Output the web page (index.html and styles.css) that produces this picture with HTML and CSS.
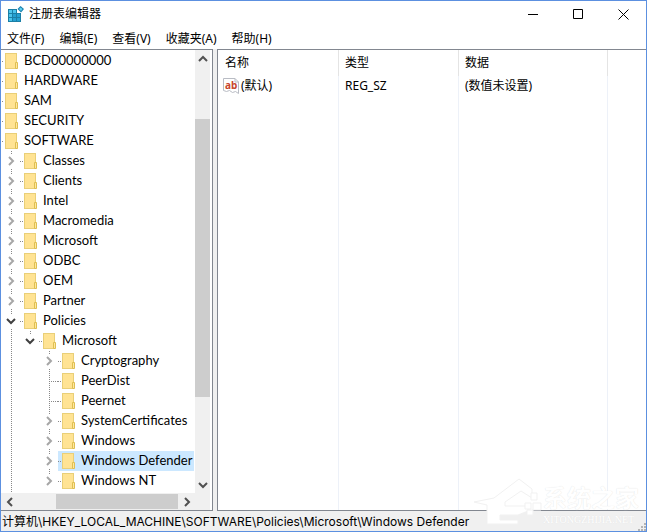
FILE: index.html
```html
<!DOCTYPE html>
<html lang="zh-CN">
<head>
<meta charset="utf-8">
<title>注册表编辑器</title>
<link rel="stylesheet" href="styles.css">
</head>
<body>
<svg class="defs" aria-hidden="true">
  <symbol id="folder" viewBox="0 0 13 16">
    <rect x=".5" y=".5" width="11" height="15" fill="#ffe393" stroke="#e9cf78"/>
    <path d="M10.500 9.500h2v6h-2z" fill="#ffe79f" stroke="#dfbf52"/>
  </symbol>
  <symbol id="right" viewBox="0 0 10 10"><path d="M3 1l4 4-4 4" fill="none" stroke="currentColor" stroke-width="2"/></symbol>
  <symbol id="left" viewBox="0 0 10 10"><path d="M7 1L3 5l4 4" fill="none" stroke="currentColor" stroke-width="2"/></symbol>
  <symbol id="down" viewBox="0 0 10 10"><path d="M1 3l4 4 4-4" fill="none" stroke="currentColor" stroke-width="2"/></symbol>
  <symbol id="up" viewBox="0 0 10 10"><path d="M1 7l4-4 4 4" fill="none" stroke="currentColor" stroke-width="2"/></symbol>
</svg>
<div class="window">
  <header class="titlebar">
    <svg class="app-icon" viewBox="0 0 16 16" aria-hidden="true">
      <path d="M0 3h9v4h4v9H0z" fill="#1b7fa6"/>
      <path d="M1 4h3v3H1zM5 4h3v3H5zM1 8h3v3H1zM1 12h3v3H1z" fill="#4cc4ec"/>
      <path d="M5 8h3v3H5zM9 8h3v3H9zM5 12h3v3H5zM9 12h3v3H9z" fill="#25a0d2"/>
      <path d="M12.500 0L16 3l-3 3.500L9.500 3z" fill="#1880ad"/>
      <path d="M12.500 1.500L14.500 3 13 5 11 3z" fill="#5fd0f2"/>
    </svg>
    <h1>注册表编辑器</h1>
    <div class="controls">
      <button aria-label="最小化"><svg viewBox="0 0 11 11"><path d="M0 5.500h10" stroke="#000"/></svg></button>
      <button aria-label="最大化"><svg viewBox="0 0 11 11"><path d="M.5.5h9v9H.5z" fill="none" stroke="#000"/></svg></button>
      <button aria-label="关闭"><svg viewBox="0 0 11 11"><path d="M.5.5l10 10M10.500.5l-10 10" stroke="#000"/></svg></button>
    </div>
  </header>
  <nav class="menu">
    <button>文件(F)</button><button>编辑(E)</button><button>查看(V)</button><button>收藏夹(A)</button><button>帮助(H)</button>
  </nav>
  <main class="panes">
    <section class="pane tree-pane">
      <div class="tree">
        <ul class="root">
          <li><div class="row"><svg class="folder"><use href="#folder"/></svg><span>BCD00000000</span></div></li>
          <li><div class="row"><svg class="folder"><use href="#folder"/></svg><span>HARDWARE</span></div></li>
          <li><div class="row"><svg class="folder"><use href="#folder"/></svg><span>SAM</span></div></li>
          <li><div class="row"><svg class="folder"><use href="#folder"/></svg><span>SECURITY</span></div></li>
          <li class="fill"><div class="row"><svg class="folder"><use href="#folder"/></svg><span>SOFTWARE</span></div>
            <ul class="branch open-end">
              <li class="node"><button class="toggle" aria-label="展开"><svg><use href="#right"/></svg></button><div class="row"><svg class="folder"><use href="#folder"/></svg><span>Classes</span></div></li>
              <li class="node"><button class="toggle" aria-label="展开"><svg><use href="#right"/></svg></button><div class="row"><svg class="folder"><use href="#folder"/></svg><span>Clients</span></div></li>
              <li class="node"><button class="toggle" aria-label="展开"><svg><use href="#right"/></svg></button><div class="row"><svg class="folder"><use href="#folder"/></svg><span>Intel</span></div></li>
              <li class="node"><button class="toggle" aria-label="展开"><svg><use href="#right"/></svg></button><div class="row"><svg class="folder"><use href="#folder"/></svg><span>Macromedia</span></div></li>
              <li class="node"><button class="toggle" aria-label="展开"><svg><use href="#right"/></svg></button><div class="row"><svg class="folder"><use href="#folder"/></svg><span>Microsoft</span></div></li>
              <li class="node"><button class="toggle" aria-label="展开"><svg><use href="#right"/></svg></button><div class="row"><svg class="folder"><use href="#folder"/></svg><span>ODBC</span></div></li>
              <li class="node"><button class="toggle" aria-label="展开"><svg><use href="#right"/></svg></button><div class="row"><svg class="folder"><use href="#folder"/></svg><span>OEM</span></div></li>
              <li class="node"><button class="toggle" aria-label="展开"><svg><use href="#right"/></svg></button><div class="row"><svg class="folder"><use href="#folder"/></svg><span>Partner</span></div></li>
              <li class="node"><button class="toggle open" aria-label="折叠"><svg><use href="#down"/></svg></button><div class="row"><svg class="folder"><use href="#folder"/></svg><span>Policies</span></div>
                <ul class="branch single">
                  <li class="node"><button class="toggle open" aria-label="折叠"><svg><use href="#down"/></svg></button><div class="row"><svg class="folder"><use href="#folder"/></svg><span>Microsoft</span></div>
                    <ul class="branch">
                      <li class="node"><button class="toggle" aria-label="展开"><svg><use href="#right"/></svg></button><div class="row"><svg class="folder"><use href="#folder"/></svg><span>Cryptography</span></div></li>
                      <li class="node"><i class="link"></i><div class="row"><svg class="folder"><use href="#folder"/></svg><span>PeerDist</span></div></li>
                      <li class="node"><i class="link"></i><div class="row"><svg class="folder"><use href="#folder"/></svg><span>Peernet</span></div></li>
                      <li class="node"><button class="toggle" aria-label="展开"><svg><use href="#right"/></svg></button><div class="row"><svg class="folder"><use href="#folder"/></svg><span>SystemCertificates</span></div></li>
                      <li class="node"><button class="toggle" aria-label="展开"><svg><use href="#right"/></svg></button><div class="row"><svg class="folder"><use href="#folder"/></svg><span>Windows</span></div></li>
                      <li class="node"><button class="toggle" aria-label="展开"><svg><use href="#right"/></svg></button><div class="row selected"><svg class="folder"><use href="#folder"/></svg><span>Windows Defender</span></div></li>
                      <li class="node"><button class="toggle" aria-label="展开"><svg><use href="#right"/></svg></button><div class="row"><svg class="folder"><use href="#folder"/></svg><span>Windows NT</span></div></li>
                    </ul>
                  </li>
                </ul>
              </li>
            </ul>
          </li>
        </ul>
      </div>
      <div class="vbar">
        <button aria-label="向上"><svg><use href="#up"/></svg></button>
        <div class="track"><div class="thumb"></div></div>
        <button aria-label="向下"><svg><use href="#down"/></svg></button>
      </div>
      <div class="hbar">
        <button aria-label="向左"><svg><use href="#left"/></svg></button>
        <div class="track"><div class="thumb"></div></div>
        <button aria-label="向右"><svg><use href="#right"/></svg></button>
      </div>
    </section>
    <section class="pane list-pane">
      <table>
        <thead><tr><th class="name">名称</th><th class="type">类型</th><th class="data">数据</th><th></th></tr></thead>
        <tbody>
          <tr>
            <td><div class="value"><svg class="ab" viewBox="0 0 16 16" aria-hidden="true">
              <path d="M.5.5H12L15.500 4v11.500l-3-2-3 1-3-2-3 1-3-1z" fill="#fff" stroke="#b9bcc4"/>
              <path d="M12 .5V4h3.500" fill="none" stroke="#b9bcc4"/>
              <text x="2" y="11">ab</text></svg><span>(默认)</span></div></td>
            <td>REG_SZ</td><td>(数值未设置)</td><td></td>
          </tr>
          <tr class="rest"><td></td><td></td><td></td><td></td></tr>
        </tbody>
      </table>
    </section>
  </main>
  <footer class="status">
    <span>计算机\HKEY_LOCAL_MACHINE\SOFTWARE\Policies\Microsoft\Windows Defender</span>
    <svg class="grip" viewBox="0 0 9 9" aria-hidden="true"><path d="M7 1h2v2H7zM7 4h2v2H7zM4 4h2v2H4zM7 7h2v2H7zM4 7h2v2H4zM1 7h2v2H1z" fill="#b4b4b4"/></svg>
  </footer>
  <div class="watermark">
    <svg viewBox="0 0 70 48" aria-hidden="true">
      <path d="M1 25l20-4L46 2l13 10v9l-11-7-16 11v4h23v5l-10 4H27v5h18v4H14V28z" fill="#fff" stroke="#f1f1f1"/>
      <path d="M58 16h6v7h-6zM52 26h6v6h-6zM60 26h8v7h-8zM54 33h6v5h-6z" fill="#fff" stroke="#f1f1f1"/>
    </svg>
    <div><b>系统之家</b><small>XITONGZHIJIA.NET</small></div>
  </div>
</div>
</body>
</html>
```
FILE: styles.css
```css
* { box-sizing: border-box; }
body {
  margin: 0;
  font: 12px/20px "Noto Sans", "Noto Sans CJK SC", sans-serif;
  color: #000;
}
button { border: 0; padding: 0; background: none; font: inherit; color: inherit; }
ul { list-style: none; margin: 0; padding: 0; }
svg { display: block; flex: none; }
.defs { position: absolute; width: 0; height: 0; }

.window {
  position: relative;
  display: flex;
  flex-direction: column;
  height: 100vh;
  border: 1px solid #5c90e0;
  background: #fff;
}

.titlebar { display: flex; align-items: center; height: 26px; padding-left: 7px; }
.app-icon { width: 16px; height: 16px; }
.titlebar h1 { flex: 1; margin: 0 0 0 5px; font-size: 12px; font-weight: 400; }
.controls { display: flex; }
.controls button { display: grid; place-items: center; width: 45px; height: 24px; }
.controls svg { width: 11px; height: 11px; }

.menu { display: flex; gap: 15px; height: 22px; padding: 1px 0 0 6px; }

.panes { flex: 1; min-height: 0; display: flex; gap: 4px; background: #f0f0f0; }
.pane { border: solid #828790; border-width: 1px 0; background: #fff; }
.tree-pane {
  flex: none;
  display: grid;
  grid-template: minmax(0, 1fr) 17px / minmax(0, 1fr) 15px;
  width: 212px;
  padding-right: 2px;
  border-right-width: 1px;
}
.list-pane { flex: 1; border-left-width: 1px; }

.tree {
  display: flex;
  overflow: hidden;
  padding-top: 1px;
  font-family: Lato, "Noto Sans", sans-serif;
  font-size: 13px;
  white-space: nowrap;
}
.root { display: flex; flex-direction: column; }
.root > li > .row { padding-left: 4px; background: linear-gradient(#888, #888) no-repeat 1px 10px / 1px 1px; }
.fill { flex: 1; display: flex; flex-direction: column; }
.open-end { flex: 1; margin-left: 4px; }
.row { display: flex; align-items: center; gap: 6px; height: 20px; line-height: 18px; }
.row span { height: 20px; }
.folder { width: 13px; height: 16px; }
.node { display: grid; grid-template-columns: 15px 1fr; }
.node > .row {
  padding: 0 2px 0 4px;
  background: repeating-linear-gradient(90deg, #888 0 1px, transparent 1px 2px) no-repeat 0 10px / 3px 1px;
}
.node > .branch { grid-column: 1 / 3; margin-left: 19px; }
.node > .selected { background-color: #cce8ff; }
.branch { background: repeating-linear-gradient(#888 0 1px, transparent 1px 2px) no-repeat 6px 0 / 1px 100%; }
.branch:not(.open-end) { background-size: 1px calc(100% - 10px); }
.branch.single { background-size: 1px 10px; }
.toggle { display: grid; place-items: center; align-self: center; width: 12px; height: 14px; background: #fff; color: #a6a6a6; }
.toggle svg { width: 10px; height: 10px; }
.toggle.open { color: #404040; }
.link {
  margin-left: 6px;
  background: repeating-linear-gradient(90deg, #888 0 1px, transparent 1px 2px) no-repeat 0 10px / 100% 1px;
}

.vbar, .hbar { display: flex; background: #f0f0f0; color: #505050; }
.vbar { flex-direction: column; }
.hbar { grid-column: 1 / 3; padding-right: 15px; }
.vbar button, .hbar button { display: grid; place-items: center; width: 15px; height: 17px; }
.hbar button { width: 17px; }
.vbar svg, .hbar svg { width: 10px; height: 10px; }
.track { flex: 1; }
.thumb { background: #cdcdcd; }
.vbar .thumb { height: 68%; margin-top: 52px; }
.hbar .thumb { width: 76%; height: 15px; margin: 1px 0 0 auto; }

table { width: 100%; height: 100%; border-spacing: 0; table-layout: fixed; }
th, td { padding: 0 0 0 6px; border-right: 1px solid #edf1f8; font-weight: 400; text-align: left; white-space: nowrap; }
th { height: 26px; border-color: #e4e4e4; }
td { height: 20px; }
th:last-child, td:last-child { border-right: 0; }
th:first-child { padding-left: 7px; }
td:first-child { padding-left: 5px; }
.name { width: 121px; }
.type { width: 120px; }
.data { width: 149px; }
.rest td { height: auto; }
.value { display: flex; align-items: center; gap: 2px; }
.ab { width: 16px; height: 16px; overflow: visible; }
.ab text { font: 700 10px "Noto Sans", sans-serif; fill: #c8452c; }

.status { display: flex; justify-content: space-between; height: 20px; padding: 2px 0 0 1px; background: #f0f0f0; }
.status span { font-family: Inter, "Noto Sans CJK SC", sans-serif; line-height: 18px; }
.grip { align-self: flex-end; width: 9px; height: 9px; }

.watermark {
  position: absolute;
  right: 7px;
  bottom: 6px;
  display: flex;
  color: #fff;
  text-shadow: 0 0 1px #ddd;
  pointer-events: none;
}
.watermark svg { width: 70px; height: 48px; }
.watermark b { display: block; padding-top: 4px; font-size: 24px; line-height: 34px; }
.watermark small { display: block; font: 10px/10px "Liberation Serif", serif; }
```
